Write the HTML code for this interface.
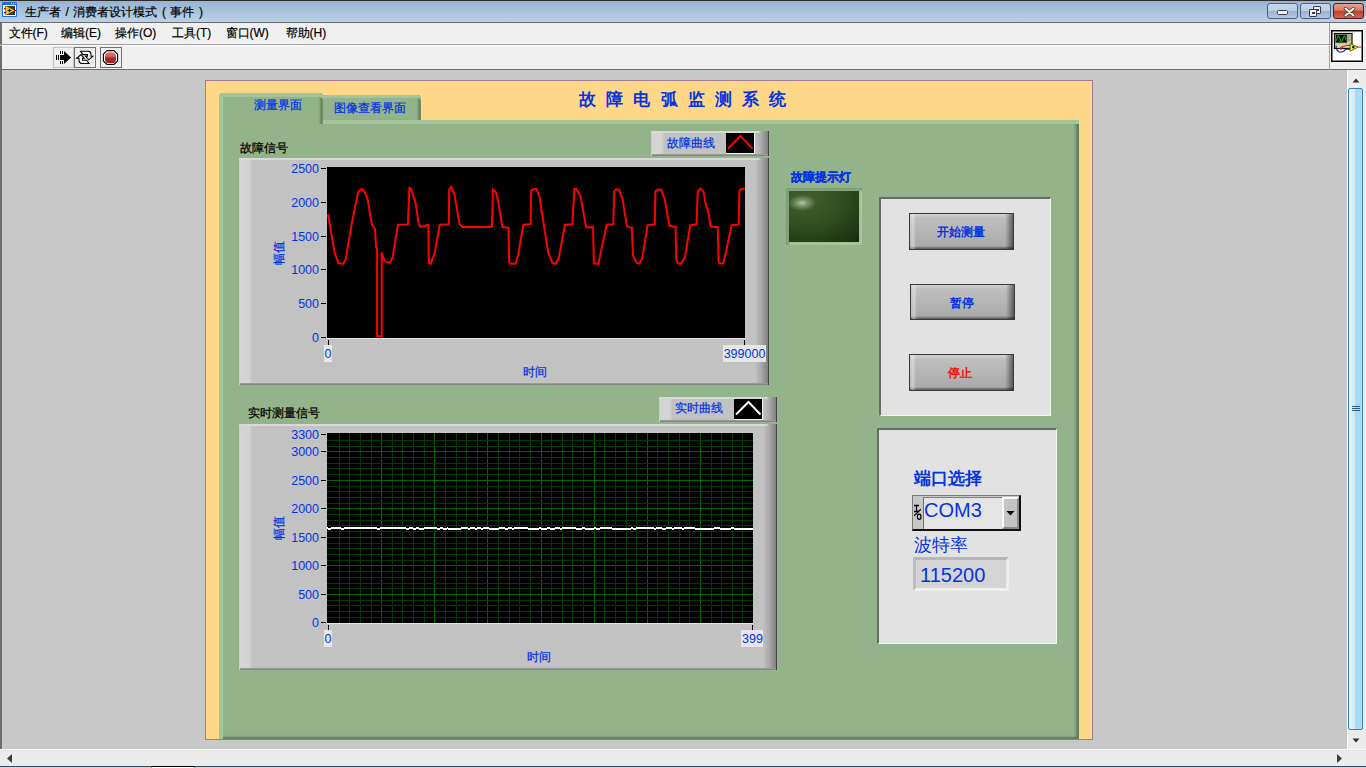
<!DOCTYPE html>
<html><head><meta charset="utf-8">
<style>
*{margin:0;padding:0;box-sizing:border-box}
html,body{width:1366px;height:768px;overflow:hidden;background:#c8c8c8;font-family:"Liberation Sans",sans-serif;}
.a{position:absolute}
#title{left:0;top:0;width:1366px;height:23px;background:linear-gradient(#98b3d3,#b9d2ea);border-top:1px solid #2b2b2b;border-bottom:1px solid #6a6a6a}
#title .t{left:25px;top:2.5px;font-size:12px;word-spacing:1.2px;color:#000;white-space:nowrap;-webkit-text-stroke:0.2px #000}
#menu{left:0;top:23px;width:1366px;height:22px;background:#f0f0f0;border-left:2px solid #6e6e6e}
.mi{top:2px;font-size:12px;color:#000;white-space:nowrap;-webkit-text-stroke:0.2px #000}
#tool{left:0;top:45px;width:1366px;height:25px;background:#f0f0f0;border-top:1px solid #fafafa;border-bottom:1px solid #6e6e6e;border-left:2px solid #6e6e6e}
.tb{width:21px;height:21px;border:1px solid #a8a8a8;background:#ececec}
#main{left:0;top:70px;width:1347px;height:679px;background:#c8c8c8;border-left:2px solid #6e6e6e}
#vs{left:1347px;top:70px;width:19px;height:679px;background:#ececec;border-left:1px solid #fafafa}
#hs{left:0;top:749px;width:1366px;height:17px;background:#ececec;border-top:1px solid #f8f8f8;box-shadow:inset 0 1px 0 #e2e2e2}
#panel{left:205px;top:80px;width:888px;height:660px;background:#ffd789;border:1px solid #9c7a98}
#green{left:219px;top:120px;width:860px;height:619px;background:#93b38a;
 box-shadow: inset 4px 0 0 0 #a5c69b, inset 0 4px 0 0 #a5c69b, inset -4px 0 3px -1px #5f7d57, inset 0 -3px 2px -1px #5f7d57}
.tab{background:#93b38a;border-radius:4px 4px 0 0}
.lbl{font-size:12px;white-space:nowrap;-webkit-text-stroke:0.25px currentColor}
.blue{color:#0434e4}
.frame{background:linear-gradient(90deg,#c6c3ca 0,#d5d5d5 1px,#d2d2d2 11px,#c6c6c6 12.5px,#c2c2c2 13px,#c2c2c2 calc(100% - 14px),#aaaaaa calc(100% - 8px),#808080 calc(100% - 1px),#444 calc(100% - 1px))}
.ftop{position:absolute;left:0;top:0;right:8px;height:2px;background:linear-gradient(90deg,#d9d9d9 0,#d9d9d9 calc(100% - 3px),rgba(217,217,217,0) 100%)}
.fbot{position:absolute;left:1px;bottom:0;right:1px;height:2px;background:linear-gradient(#a4a4a4,#7c7c7c)}
.yl{position:absolute;right:0;width:60px;text-align:right;font-size:12.5px;color:#0434e4;line-height:16px}
.tk{position:absolute;right:-7px;width:5px;height:1px;background:#000}
.btn{border:1px solid #3a3a3a;background:linear-gradient(90deg,rgba(0,0,0,0) calc(100% - 8px),rgba(0,0,0,0.5) 100%),linear-gradient(90deg,rgba(255,255,255,0.15) 0,rgba(255,255,255,0.4) 3px,rgba(255,255,255,0) 6px),linear-gradient(0deg,rgba(0,0,0,0.5) 0,rgba(0,0,0,0) 3px),linear-gradient(180deg,rgba(255,255,255,0.25) 0,rgba(255,255,255,0) 4px),linear-gradient(#c2c2c2,#a8a8a8)}
.btxt{font-size:12px;font-weight:bold;text-align:center;width:100%;position:absolute}
</style></head><body>

<div id="title" class="a">
  <svg class="a" style="left:0;top:-1px" width="20" height="20" viewBox="0 0 20 20">
    <rect x="2" y="2" width="15" height="15" rx="1" fill="#1a6ee0"/>
    <rect x="3" y="5" width="13" height="11" fill="#fff"/>
    <rect x="5" y="6" width="10" height="9" fill="#383838"/>
    <polygon points="5.5,5.8 14.5,10.5 5.5,15.2" fill="#f2c81c"/>
    <path d="M9.5,8.7 v3.6 M7.7,10.5 h3.6" stroke="#222" stroke-width="1.2"/>
    <rect x="4" y="8" width="2" height="1.2" fill="#f00"/>
    <rect x="4" y="12" width="2" height="1.2" fill="#00f"/>
    <rect x="14" y="10" width="2" height="1.2" fill="#f00"/>
    <circle cx="11.5" cy="3.5" r="0.7" fill="#e8e040"/><circle cx="13.5" cy="3.5" r="0.7" fill="#e8e040"/><circle cx="15.5" cy="3.5" r="0.7" fill="#f0a0a0"/>
  </svg>
  <div class="a t">生产者 / 消费者设计模式 ( 事件 )</div>
  <div class="a" style="left:1267px;top:2px;width:31px;height:16px;border:1px solid #4d6185;border-radius:3px;background:linear-gradient(#c8d8ea 0,#b9cde4 50%,#98b2d2 50%,#b0c8e4 100%)">
    <div class="a" style="left:9px;top:6px;width:11px;height:5px;background:#f0f0f0;border:1px solid #3a3a50;border-radius:1.5px"></div>
  </div>
  <div class="a" style="left:1300px;top:2px;width:31px;height:16px;border:1px solid #4d6185;border-radius:3px;background:linear-gradient(#c8d8ea 0,#b9cde4 50%,#98b2d2 50%,#b0c8e4 100%)">
    <div class="a" style="left:12px;top:2px;width:8px;height:8px;background:#f0f0f0;border:1px solid #3a3a50;border-radius:1px"><div class="a" style="left:2px;top:2px;width:3px;height:2px;border:1px solid #3a3a50"></div></div>
    <div class="a" style="left:8px;top:5px;width:8px;height:8px;background:#f0f0f0;border:1px solid #3a3a50;border-radius:1px"><div class="a" style="left:2px;top:2px;width:3px;height:2px;border:1px solid #3a3a50"></div></div>
  </div>
  <div class="a" style="left:1333px;top:2px;width:31px;height:16px;border:1px solid #5a1a20;border-radius:3px;background:linear-gradient(#e8a090 0,#d87a68 45%,#c04028 50%,#d06850 100%)">
    <svg class="a" style="left:9px;top:3px" width="13" height="11" viewBox="0 0 13 11"><path d="M2.5,1.5 L10.5,8.5 M10.5,1.5 L2.5,8.5" stroke="#4a3a3a" stroke-width="3.6" stroke-linecap="round"/><path d="M2.5,1.5 L10.5,8.5 M10.5,1.5 L2.5,8.5" stroke="#f0f0f0" stroke-width="2" stroke-linecap="round"/></svg>
  </div>
</div>

<div id="menu" class="a">
  <div class="a mi" style="left:6.5px">文件(F)</div>
  <div class="a mi" style="left:59px">编辑(E)</div>
  <div class="a mi" style="left:113px">操作(O)</div>
  <div class="a mi" style="left:170px">工具(T)</div>
  <div class="a mi" style="left:223.5px">窗口(W)</div>
  <div class="a mi" style="left:283.5px">帮助(H)</div>
  <div class="a" style="left:-2px;top:21px;width:1331px;height:1px;background:#a0a0a0"></div>
  <div class="a" style="left:1327px;top:0;width:1px;height:22px;background:#a0a0a0"></div>
</div>
<div id="tool" class="a">
  <div class="a" style="left:51px;top:1px;width:21px;height:21px;border:1px solid #c4c4c4;background:#efefef">
    <svg class="a" style="left:0;top:0" width="19" height="19" viewBox="0 0 19 19">
      <rect x="2" y="7" width="1" height="5" fill="#000"/><rect x="4" y="7" width="1" height="5" fill="#000"/>
      <rect x="6" y="3" width="1" height="3" fill="#000"/><rect x="8" y="3" width="1" height="3" fill="#000"/>
      <rect x="6" y="13" width="1" height="3" fill="#000"/><rect x="8" y="13" width="1" height="3" fill="#000"/>
      <rect x="6" y="7" width="5" height="5" fill="#000"/>
      <polygon points="10,3 17,9.5 10,16" fill="#000"/>
    </svg>
  </div>
  <div class="a" style="left:72px;top:1px;width:22px;height:21px;border:1px solid #707070;background:#efefef">
    <svg class="a" style="left:0;top:0" width="20" height="19" viewBox="75 48 20 19">
      <path d="M80.6,51.3 H88.5 Q91,51.6 91,54.5 V56.3 H92.8 L88.75,59.8 L85.6,56.3 H87.5 V54.6 H82.9 Z" fill="#fff" stroke="#000" stroke-width="1.05" stroke-linejoin="miter"/>
      <path d="M89,63.5 H81.6 Q79,63.2 79,60 V58.3 H76.6 L81.1,54.6 L84.2,58.3 H82.5 V60.3 H86.7 Z" fill="#fff" stroke="#000" stroke-width="1.05" stroke-linejoin="miter"/>
    </svg>
  </div>
  <div class="a" style="left:98px;top:1px;width:22px;height:21px;border:1px solid #707070;background:#efefef">
    <svg class="a" style="left:0;top:0" width="20" height="19" viewBox="101 48 20 19">
      <defs><linearGradient id="rg" x1="0" y1="0" x2="0" y2="1"><stop offset="0" stop-color="#e07a7a"/><stop offset="0.45" stop-color="#cc5555"/><stop offset="0.5" stop-color="#b02a2a"/><stop offset="1" stop-color="#9a2020"/></linearGradient></defs>
      <polygon points="107,50.6 114,50.6 117.6,54.2 117.6,61 114,64.5 107,64.5 103.4,61 103.4,54.2" fill="#fff" stroke="#000" stroke-width="1.1"/>
      <rect x="105" y="52.2" width="11" height="11" rx="4" fill="url(#rg)"/>
    </svg>
  </div>
  <div class="a" style="left:1327px;top:0;width:1px;height:24px;background:#a0a0a0"></div>
</div>
<svg class="a" style="left:1331px;top:30px" width="32" height="32" viewBox="0 0 32 32">
  <rect x="0.75" y="0.75" width="30.5" height="30.5" fill="#fff" stroke="#000" stroke-width="1.5"/>
  <rect x="3.5" y="3.5" width="17.5" height="15" fill="#d8d6a6" stroke="#000" stroke-width="1.2"/>
  <rect x="4.3" y="4.3" width="11.8" height="8.6" fill="#000" stroke="#8a8a8a" stroke-width="0.8"/>
  <polyline points="5.00,11.06 5.48,9.96 5.96,8.56 6.45,7.21 6.93,6.24 7.41,5.90 7.89,6.27 8.37,7.26 8.85,8.61 9.34,10.01 9.82,11.09 10.30,11.58 10.78,11.38 11.26,10.51 11.75,9.21 12.23,7.79 12.71,6.61 13.19,5.97 13.67,6.02 14.15,6.74 14.64,7.97 15.12,9.40 15.60,10.66" stroke="#10b010" stroke-width="1.1" fill="none"/>
  <path d="M17.5,5 v2.5 M19,5 v2.5" stroke="#808060" stroke-width="0.7"/>
  <ellipse cx="18.2" cy="9.8" rx="1" ry="1.4" fill="#f0c8a0" stroke="#606060" stroke-width="0.6"/>
  <path d="M5.2,15.6 V18.6 Q7,22.3 9.7,22.3 Q12.5,22.3 15.1,19.1 H19.1" stroke="#1020a0" stroke-width="1.1" fill="none"/>
  <path d="M16,15.4 Q12,16 11,18 Q10,21 9.2,19 Q9.5,16.5 12,16 M16,15.4 H19.1" stroke="#e01010" stroke-width="1" fill="none"/>
  <polygon points="19.1,13.6 27.2,17.1 19.1,21.3" fill="#f4f020" stroke="#505000" stroke-width="0.8"/>
  <path d="M22.3,15.8 v2.6 M21,17.1 h2.6" stroke="#000" stroke-width="1.1"/>
  <path d="M27.2,17.1 H30" stroke="#e01010" stroke-width="1"/>
</svg>
<div id="main" class="a"></div>
<div id="vs" class="a">
  <svg class="a" style="left:4px;top:8px" width="8" height="5"><polygon points="0.5,4.5 4,0.5 7.5,4.5" fill="#303030"/></svg>
  <div class="a" style="left:0px;top:18px;width:15px;height:642px;border:1px solid #3c7fb1;border-radius:2px;background:linear-gradient(90deg,#e3f2fb 0,#d0ebf9 45%,#a6d9f4 50%,#aadcf6 100%)"></div>
  <svg class="a" style="left:4px;top:335px" width="8" height="7"><path d="M0,1.5h8M0,3.5h8M0,5.5h8" stroke="#2a5a80"/></svg>
  <svg class="a" style="left:4px;top:668px" width="8" height="5"><polygon points="0.5,0.5 4,4.5 7.5,0.5" fill="#303030"/></svg>
</div>
<div id="hs" class="a">
  <svg class="a" style="left:7px;top:4px" width="5" height="9"><polygon points="5,0 0,4.5 5,9" fill="#404040"/></svg>
  <svg class="a" style="left:1337px;top:4px" width="5" height="9"><polygon points="0,0 5,4.5 0,9" fill="#404040"/></svg>
</div>

<div class="a" style="left:0;top:766px;width:1366px;height:1px;background:#3c4854"></div>
<div class="a" style="left:0;top:767px;width:1366px;height:1px;background:#c6daee"></div>
<div class="a" style="left:151px;top:766px;width:44px;height:2px;background:#fff;border-top:1px solid #000;border-radius:3px 3px 0 0"></div>
<div id="panel" class="a"></div>
<div class="a tab" style="left:322px;top:95px;width:99px;height:26px;border-radius:3px 4px 0 0;box-shadow: inset 1px 0 0 0 #a5c69b, inset 0 3px 1px 0 #a5c69b, inset -3px 0 2px 0 #67875e"></div>
<div id="green" class="a"></div>
<div class="a tab" style="left:219px;top:93px;width:104px;height:31px;border-radius:4px 4px 0 0;box-shadow: inset 4px 0 0 0 #a5c69b, inset 0 4px 1px 0 #a5c69b, inset -3px 0 2px 0 #67875e"></div>
<div class="a" style="left:223px;top:120px;width:96px;height:6px;background:#93b38a"></div>
<div class="a lbl blue" style="left:254px;top:97px">测量界面</div>
<div class="a lbl blue" style="left:334px;top:100px">图像查看界面</div>
<div class="a blue" style="left:579px;top:88px;font-size:17px;font-weight:bold;letter-spacing:10.2px;white-space:nowrap">故障电弧监测系统</div>

<!-- graph 1 -->
<div class="a lbl" style="left:240px;top:140px;color:#000">故障信号</div>
<div class="a frame" style="left:239px;top:158px;width:530px;height:227px;
"><div class="ftop"></div><div class="fbot"></div></div>
<div class="a" style="left:239px;top:158px;width:88px;height:190px"><div class="yl" style="right:8px;top:2.9px">2500</div>
<div class="tk" style="right:1px;top:10px"></div>
<div class="yl" style="right:8px;top:36.9px">2000</div>
<div class="tk" style="right:1px;top:44px"></div>
<div class="yl" style="right:8px;top:70.9px">1500</div>
<div class="tk" style="right:1px;top:78px"></div>
<div class="yl" style="right:8px;top:104.1px">1000</div>
<div class="tk" style="right:1px;top:111px"></div>
<div class="yl" style="right:8px;top:137.9px">500</div>
<div class="tk" style="right:1px;top:145px"></div>
<div class="yl" style="right:8px;top:172.1px">0</div>
<div class="tk" style="right:1px;top:179px"></div></div>
<svg class="a" style="left:327px;top:167px" width="418" height="171" viewBox="0 0 418 171">
  <rect width="418" height="171" fill="#000"/>
  <polyline points="1.1,47.4 7.4,84.9 11.5,96.3 16.3,96.8 18.8,91.8 25.1,54.7 31.3,24.5 34.5,21.8 37.6,24.5 40.7,32.8 44.9,57.8 48.0,62.0 49.0,79.7 50.1,81.8 50.1,169.2 54.7,169.2 54.7,85.5 57.4,94.2 62.6,95.9 65.7,90.1 70.9,57.8 80.9,57.4 82.4,20.9 83.8,21.3 88.6,35.9 91.8,57.8 93.8,59.9 98.0,58.8 101.3,57.8 101.8,96.3 103.8,96.8 107.6,85.9 112.8,57.8 121.8,57.2 122.2,22.4 124.2,19.9 127.4,27.6 132.6,57.2 135.7,59.9 164.9,59.9 165.9,22.4 169.0,25.5 171.1,33.8 175.3,59.9 181.5,60.9 182.2,95.3 183.6,96.8 188.4,96.8 191.1,88.0 196.3,57.8 203.6,57.2 204.2,23.4 206.8,22.0 209.2,22.0 212.6,29.7 214.0,40.0 221.3,85.9 225.5,96.3 228.6,96.8 231.8,91.1 238.0,57.8 245.3,57.2 247.4,22.0 249.5,22.0 253.6,29.7 258.8,58.8 259.9,60.5 266.1,59.9 266.8,96.3 271.3,96.8 279.7,57.8 286.3,57.2 287.2,24.5 289.2,22.4 291.8,22.4 295.5,31.8 299.7,57.8 300.7,59.9 304.9,60.9 305.9,88.0 309.0,95.3 312.2,96.8 315.3,91.1 320.5,58.4 327.8,57.2 328.4,24.5 330.9,22.4 334.0,22.4 337.6,31.8 342.4,58.8 348.6,59.9 349.2,92.2 350.7,96.3 353.8,96.8 358.0,90.1 363.2,58.4 369.5,57.2 370.7,24.2 373.3,21.6 376.4,24.2 379.0,38.6 381.1,43.8 383.7,59.4 390.8,60.2 391.5,94.6 392.6,96.6 396.0,96.6 398.6,86.8 404.6,58.1 411.6,57.6 412.4,23.7 414.2,22.2 417.6,21.6" fill="none" stroke="#ff0000" stroke-width="2" stroke-linejoin="miter"/>
</svg>
<div class="a" style="left:327px;top:338px;width:418px;height:1px;background:#e6e6e6"></div>
<div class="a" style="left:328px;top:340px;width:1px;height:5px;background:#000"></div>
<div class="a" style="left:744px;top:340px;width:1px;height:5px;background:#000"></div>
<div class="a" style="left:324px;top:345px;width:8px;height:17px;background:#e6e6e6"></div>
<div class="a yl" style="left:322px;top:346px;width:12px;text-align:center">0</div>
<div class="a" style="left:723px;top:345px;width:43px;height:17px;background:#e6e6e6"></div>
<div class="a yl" style="left:722px;top:346px;width:45px;text-align:center">399000</div>
<div class="a lbl blue" style="left:523px;top:364px">时间</div>
<div class="a lbl blue" style="left:267px;top:243.5px;transform:rotate(-90deg);transform-origin:center">幅值</div>

<div class="a frame" style="left:651px;top:131px;width:118px;height:25px;
"><div class="ftop"></div><div class="fbot"></div></div>
<div class="a lbl blue" style="left:667px;top:134.5px">故障曲线</div>
<svg class="a" style="left:726px;top:133px" width="29" height="21" viewBox="0 0 29 21">
  <rect width="29" height="21" fill="#f0f0f0"/><rect width="28" height="20" fill="#000"/>
  <polyline points="2,15.5 14.5,3 26.5,15.5" fill="none" stroke="#ff0000" stroke-width="2"/>
</svg>

<!-- graph 2 -->
<div class="a lbl" style="left:248px;top:405px;color:#000">实时测量信号</div>
<div class="a frame" style="left:239px;top:424px;width:538px;height:246px;
"><div class="ftop"></div><div class="fbot"></div></div>
<div class="a" style="left:239px;top:424px;width:88px;height:210px"><div class="yl" style="right:8px;top:3.2px">3300</div>
<div class="tk" style="right:1px;top:10px"></div>
<div class="yl" style="right:8px;top:20.0px">3000</div>
<div class="tk" style="right:1px;top:27px"></div>
<div class="yl" style="right:8px;top:48.8px">2500</div>
<div class="tk" style="right:1px;top:56px"></div>
<div class="yl" style="right:8px;top:77.1px">2000</div>
<div class="tk" style="right:1px;top:84px"></div>
<div class="yl" style="right:8px;top:105.7px">1500</div>
<div class="tk" style="right:1px;top:113px"></div>
<div class="yl" style="right:8px;top:134.2px">1000</div>
<div class="tk" style="right:1px;top:141px"></div>
<div class="yl" style="right:8px;top:162.7px">500</div>
<div class="tk" style="right:1px;top:170px"></div>
<div class="yl" style="right:8px;top:191.2px">0</div>
<div class="tk" style="right:1px;top:198px"></div></div>
<svg class="a" style="left:327px;top:433px" width="426" height="190" viewBox="0 0 426 190">
  <rect width="426" height="190" fill="#000"/>
  <line x1="12.5" y1="0" x2="12.5" y2="190" stroke="#003c00"/>
<line x1="22.5" y1="0" x2="22.5" y2="190" stroke="#003c00"/>
<line x1="33.5" y1="0" x2="33.5" y2="190" stroke="#003c00"/>
<line x1="44.5" y1="0" x2="44.5" y2="190" stroke="#003c00"/>
<line x1="54.5" y1="0" x2="54.5" y2="190" stroke="#006400"/>
<line x1="65.5" y1="0" x2="65.5" y2="190" stroke="#003c00"/>
<line x1="75.5" y1="0" x2="75.5" y2="190" stroke="#003c00"/>
<line x1="86.5" y1="0" x2="86.5" y2="190" stroke="#003c00"/>
<line x1="97.5" y1="0" x2="97.5" y2="190" stroke="#003c00"/>
<line x1="107.5" y1="0" x2="107.5" y2="190" stroke="#006400"/>
<line x1="118.5" y1="0" x2="118.5" y2="190" stroke="#003c00"/>
<line x1="129.5" y1="0" x2="129.5" y2="190" stroke="#003c00"/>
<line x1="139.5" y1="0" x2="139.5" y2="190" stroke="#003c00"/>
<line x1="150.5" y1="0" x2="150.5" y2="190" stroke="#003c00"/>
<line x1="160.5" y1="0" x2="160.5" y2="190" stroke="#006400"/>
<line x1="171.5" y1="0" x2="171.5" y2="190" stroke="#003c00"/>
<line x1="182.5" y1="0" x2="182.5" y2="190" stroke="#003c00"/>
<line x1="192.5" y1="0" x2="192.5" y2="190" stroke="#003c00"/>
<line x1="203.5" y1="0" x2="203.5" y2="190" stroke="#003c00"/>
<line x1="214.5" y1="0" x2="214.5" y2="190" stroke="#006400"/>
<line x1="224.5" y1="0" x2="224.5" y2="190" stroke="#003c00"/>
<line x1="235.5" y1="0" x2="235.5" y2="190" stroke="#003c00"/>
<line x1="245.5" y1="0" x2="245.5" y2="190" stroke="#003c00"/>
<line x1="256.5" y1="0" x2="256.5" y2="190" stroke="#003c00"/>
<line x1="267.5" y1="0" x2="267.5" y2="190" stroke="#006400"/>
<line x1="277.5" y1="0" x2="277.5" y2="190" stroke="#003c00"/>
<line x1="288.5" y1="0" x2="288.5" y2="190" stroke="#003c00"/>
<line x1="299.5" y1="0" x2="299.5" y2="190" stroke="#003c00"/>
<line x1="309.5" y1="0" x2="309.5" y2="190" stroke="#003c00"/>
<line x1="320.5" y1="0" x2="320.5" y2="190" stroke="#006400"/>
<line x1="330.5" y1="0" x2="330.5" y2="190" stroke="#003c00"/>
<line x1="341.5" y1="0" x2="341.5" y2="190" stroke="#003c00"/>
<line x1="352.5" y1="0" x2="352.5" y2="190" stroke="#003c00"/>
<line x1="362.5" y1="0" x2="362.5" y2="190" stroke="#003c00"/>
<line x1="373.5" y1="0" x2="373.5" y2="190" stroke="#006400"/>
<line x1="384.5" y1="0" x2="384.5" y2="190" stroke="#003c00"/>
<line x1="394.5" y1="0" x2="394.5" y2="190" stroke="#003c00"/>
<line x1="405.5" y1="0" x2="405.5" y2="190" stroke="#003c00"/>
<line x1="415.5" y1="0" x2="415.5" y2="190" stroke="#003c00"/>
<line x1="0" y1="184.5" x2="426" y2="184.5" stroke="#003c00"/>
<line x1="0" y1="178.5" x2="426" y2="178.5" stroke="#003c00"/>
<line x1="0" y1="172.5" x2="426" y2="172.5" stroke="#003c00"/>
<line x1="0" y1="167.5" x2="426" y2="167.5" stroke="#003c00"/>
<line x1="0" y1="161.5" x2="426" y2="161.5" stroke="#006400"/>
<line x1="0" y1="155.5" x2="426" y2="155.5" stroke="#003c00"/>
<line x1="0" y1="150.5" x2="426" y2="150.5" stroke="#003c00"/>
<line x1="0" y1="144.5" x2="426" y2="144.5" stroke="#003c00"/>
<line x1="0" y1="138.5" x2="426" y2="138.5" stroke="#003c00"/>
<line x1="0" y1="132.5" x2="426" y2="132.5" stroke="#006400"/>
<line x1="0" y1="127.5" x2="426" y2="127.5" stroke="#003c00"/>
<line x1="0" y1="121.5" x2="426" y2="121.5" stroke="#003c00"/>
<line x1="0" y1="115.5" x2="426" y2="115.5" stroke="#003c00"/>
<line x1="0" y1="110.5" x2="426" y2="110.5" stroke="#003c00"/>
<line x1="0" y1="104.5" x2="426" y2="104.5" stroke="#006400"/>
<line x1="0" y1="98.5" x2="426" y2="98.5" stroke="#003c00"/>
<line x1="0" y1="92.5" x2="426" y2="92.5" stroke="#003c00"/>
<line x1="0" y1="87.5" x2="426" y2="87.5" stroke="#003c00"/>
<line x1="0" y1="81.5" x2="426" y2="81.5" stroke="#003c00"/>
<line x1="0" y1="75.5" x2="426" y2="75.5" stroke="#006400"/>
<line x1="0" y1="70.5" x2="426" y2="70.5" stroke="#003c00"/>
<line x1="0" y1="64.5" x2="426" y2="64.5" stroke="#003c00"/>
<line x1="0" y1="58.5" x2="426" y2="58.5" stroke="#003c00"/>
<line x1="0" y1="53.5" x2="426" y2="53.5" stroke="#003c00"/>
<line x1="0" y1="47.5" x2="426" y2="47.5" stroke="#006400"/>
<line x1="0" y1="41.5" x2="426" y2="41.5" stroke="#003c00"/>
<line x1="0" y1="35.5" x2="426" y2="35.5" stroke="#003c00"/>
<line x1="0" y1="30.5" x2="426" y2="30.5" stroke="#003c00"/>
<line x1="0" y1="24.5" x2="426" y2="24.5" stroke="#003c00"/>
<line x1="0" y1="18.5" x2="426" y2="18.5" stroke="#006400"/>
<line x1="0" y1="13.5" x2="426" y2="13.5" stroke="#003c00"/>
<line x1="0" y1="7.5" x2="426" y2="7.5" stroke="#003c00"/>
  <rect x="0" y="94" width="1" height="2" fill="#fff"/><rect x="1" y="95" width="3" height="2" fill="#fff"/><rect x="4" y="94" width="10" height="2" fill="#fff"/><rect x="14" y="95" width="3" height="2" fill="#fff"/><rect x="17" y="94" width="33" height="2" fill="#fff"/><rect x="50" y="95" width="3" height="2" fill="#fff"/><rect x="53" y="94" width="26" height="2" fill="#fff"/><rect x="79" y="95" width="3" height="2" fill="#fff"/><rect x="82" y="94" width="4" height="2" fill="#fff"/><rect x="86" y="95" width="3" height="2" fill="#fff"/><rect x="89" y="94" width="3" height="2" fill="#fff"/><rect x="92" y="95" width="5" height="2" fill="#fff"/><rect x="97" y="94" width="13" height="2" fill="#fff"/><rect x="110" y="95" width="3" height="2" fill="#fff"/><rect x="113" y="94" width="3" height="2" fill="#fff"/><rect x="116" y="95" width="4" height="2" fill="#fff"/><rect x="120" y="94" width="1" height="2" fill="#fff"/><rect x="121" y="95" width="13" height="2" fill="#fff"/><rect x="134" y="94" width="7" height="2" fill="#fff"/><rect x="141" y="95" width="2" height="2" fill="#fff"/><rect x="143" y="94" width="5" height="2" fill="#fff"/><rect x="148" y="95" width="2" height="2" fill="#fff"/><rect x="150" y="94" width="4" height="2" fill="#fff"/><rect x="154" y="95" width="2" height="2" fill="#fff"/><rect x="156" y="94" width="6" height="2" fill="#fff"/><rect x="162" y="95" width="10" height="2" fill="#fff"/><rect x="172" y="94" width="6" height="2" fill="#fff"/><rect x="178" y="95" width="3" height="2" fill="#fff"/><rect x="181" y="94" width="4" height="2" fill="#fff"/><rect x="185" y="95" width="2" height="2" fill="#fff"/><rect x="187" y="94" width="14" height="2" fill="#fff"/><rect x="201" y="95" width="11" height="2" fill="#fff"/><rect x="212" y="94" width="2" height="2" fill="#fff"/><rect x="214" y="95" width="6" height="2" fill="#fff"/><rect x="220" y="94" width="3" height="2" fill="#fff"/><rect x="223" y="95" width="5" height="2" fill="#fff"/><rect x="228" y="94" width="5" height="2" fill="#fff"/><rect x="233" y="95" width="2" height="2" fill="#fff"/><rect x="235" y="94" width="14" height="2" fill="#fff"/><rect x="249" y="95" width="6" height="2" fill="#fff"/><rect x="255" y="94" width="3" height="2" fill="#fff"/><rect x="258" y="95" width="9" height="2" fill="#fff"/><rect x="267" y="94" width="2" height="2" fill="#fff"/><rect x="269" y="95" width="4" height="2" fill="#fff"/><rect x="273" y="94" width="12" height="2" fill="#fff"/><rect x="285" y="95" width="19" height="2" fill="#fff"/><rect x="304" y="94" width="2" height="2" fill="#fff"/><rect x="306" y="95" width="3" height="2" fill="#fff"/><rect x="309" y="94" width="18" height="2" fill="#fff"/><rect x="327" y="95" width="2" height="2" fill="#fff"/><rect x="329" y="94" width="6" height="2" fill="#fff"/><rect x="335" y="95" width="4" height="2" fill="#fff"/><rect x="339" y="94" width="6" height="2" fill="#fff"/><rect x="345" y="95" width="2" height="2" fill="#fff"/><rect x="347" y="94" width="8" height="2" fill="#fff"/><rect x="355" y="95" width="2" height="2" fill="#fff"/><rect x="357" y="94" width="11" height="2" fill="#fff"/><rect x="368" y="95" width="19" height="2" fill="#fff"/><rect x="387" y="94" width="6" height="2" fill="#fff"/><rect x="393" y="95" width="11" height="2" fill="#fff"/><rect x="404" y="94" width="3" height="2" fill="#fff"/><rect x="407" y="95" width="19" height="2" fill="#fff"/>
</svg>
<div class="a" style="left:327px;top:623px;width:426px;height:1px;background:#e6e6e6"></div>
<div class="a" style="left:328px;top:625px;width:1px;height:5px;background:#000"></div>
<div class="a" style="left:752px;top:625px;width:1px;height:5px;background:#000"></div>
<div class="a" style="left:324px;top:630px;width:8px;height:17px;background:#e6e6e6"></div>
<div class="a yl" style="left:322px;top:631px;width:12px;text-align:center">0</div>
<div class="a" style="left:741px;top:630px;width:22px;height:17px;background:#e6e6e6"></div>
<div class="a yl" style="left:740px;top:631px;width:25px;text-align:center">399</div>
<div class="a lbl blue" style="left:527px;top:649px">时间</div>
<div class="a lbl blue" style="left:266.5px;top:518.5px;transform:rotate(-90deg);transform-origin:center">幅值</div>

<div class="a frame" style="left:659px;top:397px;width:118px;height:25px;
"><div class="ftop"></div><div class="fbot"></div></div>
<div class="a lbl blue" style="left:675px;top:400px">实时曲线</div>
<svg class="a" style="left:734px;top:399px" width="29" height="21" viewBox="0 0 29 21">
  <rect width="29" height="21" fill="#f0f0f0"/><rect width="28" height="20" fill="#000"/>
  <polyline points="2,15.5 14.5,3 26.5,15.5" fill="none" stroke="#fff" stroke-width="2"/>
</svg>

<!-- LED -->
<div class="a lbl blue" style="left:791px;top:169px;font-weight:bold">故障提示灯</div>
<div class="a" style="left:786px;top:188px;width:76px;height:57px;background:#93b38a;box-shadow: inset 3px 3px 2px 0 #7f9f76, inset -3px -3px 2px 0 #a6c69c"></div>
<div class="a" style="left:789px;top:191px;width:70px;height:51px;background:radial-gradient(ellipse 14px 8px at 13px 12px,rgba(200,212,190,0.9) 0,rgba(170,190,160,0.55) 40%,rgba(120,150,100,0) 100%),radial-gradient(ellipse 90px 70px at 18px 8px,#42632e 0,#2e4e20 40%,#1a3411 75%,#0c1a06 100%)"></div>
<!-- button panel -->
<div class="a" style="left:879px;top:197px;width:172px;height:219px;background:#e2e2e2;border-top:2px solid #6a6a6a;border-left:2px solid #6a6a6a;border-right:1px solid #f4f4f4;border-bottom:1px solid #f4f4f4"></div>
<div class="a btn" style="left:909px;top:213px;width:105px;height:37px"><div class="btxt blue" style="top:10px;left:-1px">开始测量</div></div>
<div class="a btn" style="left:910px;top:284px;width:105px;height:36px"><div class="btxt blue" style="top:10px;left:-1px">暂停</div></div>
<div class="a btn" style="left:909px;top:354px;width:105px;height:37px"><div class="btxt" style="top:10px;left:-2px;color:#ff0a0a">停止</div></div>

<!-- port panel -->
<div class="a" style="left:877px;top:428px;width:180px;height:216px;background:#e2e2e2;border-top:2px solid #6a6a6a;border-left:2px solid #6a6a6a;border-right:1px solid #f4f4f4;border-bottom:1px solid #f4f4f4"></div>
<div class="a blue" style="left:913.5px;top:466.5px;font-size:17px;font-weight:bold;white-space:nowrap">端口选择</div>
<div class="a" style="left:912px;top:495px;width:109px;height:36px;background:#c8c8c8;border-top:1px solid #7a7a7a;border-left:1px solid #7a7a7a;border-right:2px solid #101010;border-bottom:2px solid #101010"></div>
<svg class="a" style="left:913px;top:503px" width="10" height="18" viewBox="0 0 10 18">
  <path d="M1,2.5 h5 M1,8.5 h5 M3.5,2.5 v6" stroke="#000" stroke-width="1.3" fill="none"/>
  <path d="M1.2,12.7 L7.8,6.3" stroke="#000" stroke-width="1.2"/>
  <ellipse cx="6.2" cy="13.7" rx="1.8" ry="2.6" fill="none" stroke="#000" stroke-width="1.2"/>
</svg>
<div class="a" style="left:923px;top:497px;width:79px;height:32px;background:#e4e4e4;border-top:1px solid #7e7e7e;border-left:1px solid #6e6e6e"></div>
<div class="a blue" style="left:924px;top:499px;font-size:20px;white-space:nowrap">COM3</div>
<div class="a" style="left:1002px;top:497px;width:17px;height:32px;background:#c4c4c4;border-top:2px solid #fafafa;border-left:2px solid #fafafa;border-right:2px solid #8a8a8a;border-bottom:2px solid #8a8a8a"></div>
<svg class="a" style="left:1006px;top:511px" width="9" height="5"><polygon points="0.5,0 8.5,0 4.5,4.5" fill="#000"/></svg>
<div class="a blue" style="left:914px;top:533px;font-size:18px;white-space:nowrap">波特率</div>
<div class="a" style="left:913px;top:557px;width:96px;height:34px;background:#d4d4d4;border-style:solid;border-width:3px;border-color:#b6b6b6 #ececec #f0f0f0 #bebebe"></div>
<div class="a blue" style="left:920px;top:564px;font-size:20px;white-space:nowrap">115200</div>

</body></html>
